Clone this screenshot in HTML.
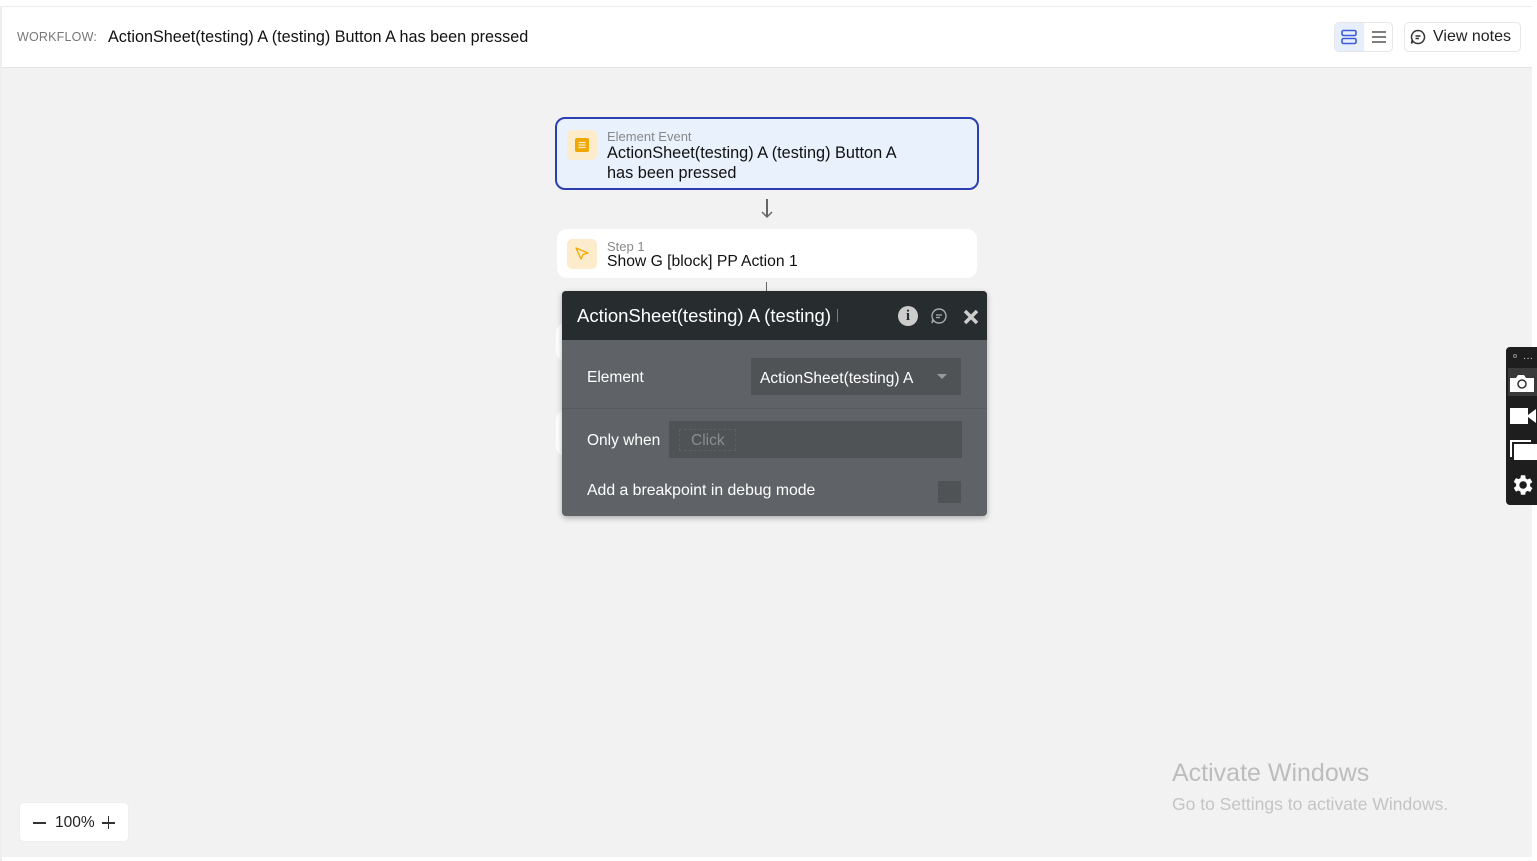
<!DOCTYPE html>
<html><head><meta charset="utf-8"><style>
*{box-sizing:border-box;margin:0;padding:0}
body{width:1537px;height:861px;background:#fff;font-family:"Liberation Sans",sans-serif;position:relative;overflow:hidden}
.a{position:absolute}
#canvas{left:2px;top:67px;width:1530px;height:790px;background:#f2f2f2;border-top:1px solid #e4e4e4}
#top{left:2px;top:6px;width:1530px;height:61px;border-top:1px solid #ececec;background:#fff}
.card{background:#fff;border-radius:10px}
.ico{width:30px;height:30px;border-radius:5px;background:#fdeccb}
</style></head><body>
<div class="a" id="top"></div>
<div class="a" style="left:0;top:6px;width:2px;height:855px;background:#eee"></div>
<div class="a" style="left:17px;top:30px;font-size:12.5px;color:#777;letter-spacing:.2px">WORKFLOW:</div>
<div class="a" style="left:108px;top:28px;font-size:16.2px;color:#111">ActionSheet(testing) A (testing) Button A has been pressed</div>
<div class="a" style="left:1334px;top:22px;width:59px;height:30px;border:1px solid #e6e6e6;border-radius:5px;background:#fff"></div>
<div class="a" style="left:1335px;top:23px;width:29px;height:28px;background:#e8effc;border-radius:4px 0 0 4px"></div>
<svg class="a" style="left:1340px;top:28px" width="18" height="18" viewBox="0 0 18 18"><rect x="2" y="2.5" width="14" height="5" rx="1.5" fill="none" stroke="#3b5bdb" stroke-width="1.6"/><rect x="2" y="10.5" width="14" height="5" rx="1.5" fill="none" stroke="#3b5bdb" stroke-width="1.6"/></svg>
<svg class="a" style="left:1370px;top:28px" width="18" height="18" viewBox="0 0 18 18"><path d="M2 4h14M2 9h14M2 14h14" stroke="#555" stroke-width="1.6"/></svg>
<div class="a" style="left:1404px;top:22px;width:117px;height:30px;border:1px solid #e6e6e6;border-radius:5px;background:#fff"></div>
<svg class="a" style="left:1409px;top:28px" width="18" height="18" viewBox="0 0 18 18"><path d="M9 2.5a6.5 6.5 0 1 1-5.2 10.4L2.5 15.5l.7-3.6A6.5 6.5 0 0 1 9 2.5z" fill="none" stroke="#333" stroke-width="1.5"/><path d="M6.5 8h5M6.5 10.5h3.5" stroke="#333" stroke-width="1.4"/></svg>
<div class="a" style="left:1433px;top:28px;font-size:16px;color:#222">View notes</div>

<div class="a" id="canvas"></div>

<div class="a" style="left:555px;top:117px;width:424px;height:73px;border:2px solid #2b3fb0;border-radius:10px;background:#e9f1fc"></div>
<div class="a ico" style="left:567px;top:130px"></div>
<svg class="a" style="left:573px;top:136px" width="18" height="18" viewBox="0 0 18 18"><rect x="2" y="2" width="14" height="14" rx="2" fill="#f0a800"/><path d="M5.5 6.5h7M5.5 9h7M5.5 11.5h7" stroke="#fdeccb" stroke-width="1.3"/></svg>
<div class="a" style="left:607px;top:129px;font-size:13px;color:#888">Element Event</div>
<div class="a" style="left:607px;top:143px;font-size:16.3px;color:#111;line-height:20px">ActionSheet(testing) A (testing) Button A<br>has been pressed</div>

<div class="a" style="left:766px;top:199px;width:1.5px;height:17px;background:#666"></div>
<svg class="a" style="left:761px;top:210px" width="12" height="10"><path d="M1 2l5 5 5-5" fill="none" stroke="#666" stroke-width="1.5"/></svg>

<div class="a card" style="left:557px;top:229px;width:420px;height:49px"></div>
<div class="a ico" style="left:567px;top:239px"></div>
<svg class="a" style="left:573px;top:245px" width="18" height="18" viewBox="0 0 18 18"><path d="M3 3l12 5-5 1.5L8 14z" fill="none" stroke="#f0a800" stroke-width="1.3" stroke-linejoin="round"/></svg>
<div class="a" style="left:607px;top:239px;font-size:13px;color:#888">Step 1</div>
<div class="a" style="left:607px;top:253px;font-size:15.7px;color:#111">Show G [block] PP Action 1</div>
<div class="a" style="left:766px;top:282px;width:1px;height:10px;background:#666"></div>
<div class="a card" style="left:556px;top:323px;width:30px;height:38px"></div>
<div class="a card" style="left:556px;top:410px;width:30px;height:46px"></div>

<div class="a" style="left:562px;top:291px;width:425px;height:225px;background:#5f6266;border-radius:4px;box-shadow:0 2px 6px rgba(0,0,0,.3)"></div>
<div class="a" style="left:562px;top:291px;width:425px;height:49px;background:#272c2f;border-radius:4px 4px 0 0"></div>
<div class="a" style="left:577px;top:305px;font-size:18.5px;color:#fff;width:261px;overflow:hidden;white-space:nowrap">ActionSheet(testing) A (testing) Button A</div>
<div class="a" style="left:898px;top:306px;width:20px;height:20px;border-radius:50%;background:#ccc;color:#272c2f;font:bold 15px/20px 'Liberation Serif',serif;text-align:center">i</div>
<svg class="a" style="left:930px;top:307px" width="18" height="18" viewBox="0 0 18 18"><path d="M9 2a7 7 0 1 1-5.6 11.2L2 16l.8-3.8A7 7 0 0 1 9 2z" fill="none" stroke="#aaa" stroke-width="1.4"/><path d="M6 8h6M6 10.5h4" stroke="#aaa" stroke-width="1.3"/></svg>
<svg class="a" style="left:962px;top:308px" width="18" height="18"><path d="M3 3l12 12M15 3L3 15" stroke="#ccc" stroke-width="3.5"/></svg>
<div class="a" style="left:587px;top:369px;font-size:15.5px;color:#fff">Element</div>
<div class="a" style="left:751px;top:358px;width:210px;height:37px;background:#505356"></div>
<div class="a" style="left:760px;top:370px;font-size:15.5px;color:#fff">ActionSheet(testing) A</div>
<svg class="a" style="left:936px;top:373px" width="12" height="8"><path d="M1 1h10L6 6z" fill="#999"/></svg>
<div class="a" style="left:562px;top:408px;width:425px;height:1px;background:#575a5e"></div>
<div class="a" style="left:587px;top:432px;font-size:15.5px;color:#fff">Only when</div>
<div class="a" style="left:669px;top:421px;width:293px;height:37px;background:#505356"></div>
<div class="a" style="left:679px;top:429px;width:57px;height:22px;border:1px dashed #5c5f63"></div>
<div class="a" style="left:691px;top:432px;font-size:15.5px;color:#8a8d90">Click</div>
<div class="a" style="left:587px;top:482px;font-size:15.8px;color:#fff">Add a breakpoint in debug mode</div>
<div class="a" style="left:938px;top:481px;width:23px;height:22px;background:#505356"></div>

<div class="a" style="left:1506px;top:347px;width:31px;height:158px;background:#1e1e1e;border-radius:4px 0 0 4px"></div>
<div class="a" style="left:1513px;top:354px;width:4px;height:4px;border-radius:50%;border:1px solid #888"></div>
<div class="a" style="left:1523px;top:353px;font-size:10px;color:#ddd">···</div>
<div class="a" style="left:1508px;top:368px;width:29px;height:28px;background:#3a3a3a"></div>
<svg class="a" style="left:1509px;top:373px" width="26" height="20" viewBox="0 0 26 20"><path d="M1 5h6l2-3h6l2 3h8v14H1z" fill="#fff"/><circle cx="13" cy="11" r="4" fill="none" stroke="#333" stroke-width="1.5"/></svg>
<svg class="a" style="left:1509px;top:406px" width="28" height="20"><rect x="1" y="2" width="18" height="16" fill="#fff"/><path d="M19 9l8-6v14l-8-6z" fill="#fff"/></svg>
<svg class="a" style="left:1509px;top:439px" width="28" height="22"><path d="M1 1h21v2H3v15H1z" fill="#fff"/><rect x="5" y="5" width="23" height="16" fill="#fff"/></svg>
<svg class="a" style="left:1509px;top:472px" width="26" height="26" viewBox="0 0 24 24"><path fill="#fff" d="M19.4 13a7.5 7.5 0 0 0 0-2l2.1-1.6-2-3.5-2.5 1a7.6 7.6 0 0 0-1.7-1L15 3h-4l-.4 2.6a7.6 7.6 0 0 0-1.7 1l-2.5-1-2 3.5L6.6 11a7.5 7.5 0 0 0 0 2l-2.2 1.6 2 3.5 2.5-1a7.6 7.6 0 0 0 1.7 1L11 21h4l.4-2.6a7.6 7.6 0 0 0 1.7-1l2.5 1 2-3.5zM13 15.5a3.5 3.5 0 1 1 0-7 3.5 3.5 0 0 1 0 7z"/></svg>

<div class="a" style="left:1172px;top:759px;font-size:25px;color:#bdbdbd">Activate Windows</div>
<div class="a" style="left:1172px;top:794px;font-size:17.5px;color:#c4c4c4">Go to Settings to activate Windows.</div>

<div class="a" style="left:19px;top:802px;width:110px;height:40px;background:#fff;border-radius:5px;border:1px solid #eee"></div>
<div class="a" style="left:33px;top:822px;width:13px;height:1.6px;background:#333"></div>
<div class="a" style="left:55px;top:814px;font-size:15.5px;color:#222">100%</div>
<div class="a" style="left:102px;top:822px;width:13px;height:1.6px;background:#333"></div>
<div class="a" style="left:107.7px;top:816px;width:1.6px;height:13px;background:#333"></div>
</body></html>
